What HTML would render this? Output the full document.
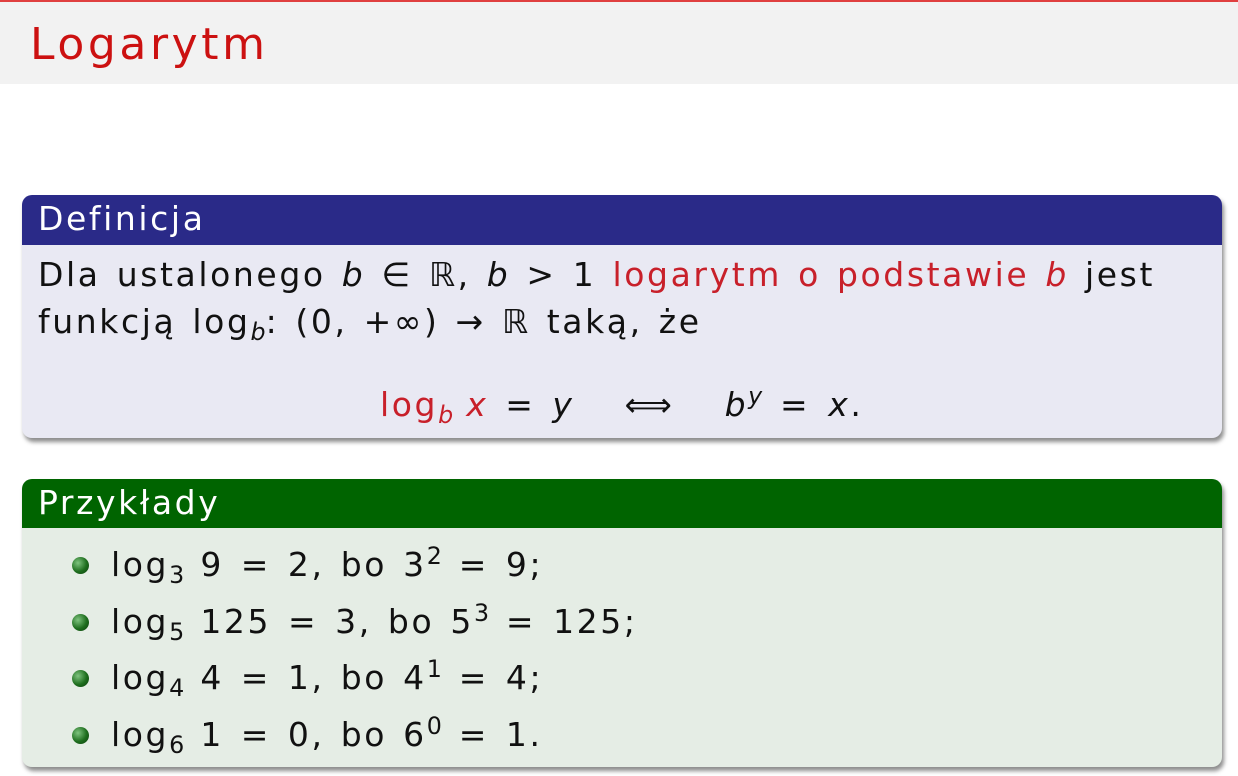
<!DOCTYPE html>
<html><head><meta charset="utf-8"><style>
html,body{margin:0;padding:0}
body{width:1238px;height:776px;position:relative;background:#fff;font-family:"DejaVu Sans","Liberation Sans",sans-serif;color:#111;overflow:hidden}
.t{position:absolute;white-space:nowrap;line-height:1;font-size:33px;letter-spacing:2.6px;word-spacing:3px}
.red{color:#c8202a}
i{font-style:italic}
sub{font-size:0.72em;vertical-align:-0.3em;line-height:0;letter-spacing:0}
sup{font-size:0.72em;vertical-align:0.5em;line-height:0;letter-spacing:0}
.m{display:inline-block;text-align:center}
.box{position:absolute;left:22px;width:1200px;border-radius:10px;overflow:hidden;box-shadow:2px 4px 4px rgba(0,0,0,0.45)}
.bul{position:absolute;left:72px;width:17px;height:17px;border-radius:50%;background:radial-gradient(circle at 35% 35%,#7fc47f,#1e6e1e 55%,#0b3d0b)}
</style></head><body>
<div style="position:absolute;left:0;top:0;width:1238px;height:2px;background:#e04040"></div>
<div style="position:absolute;left:0;top:2px;width:1238px;height:82px;background:#f2f2f2"></div>
<div class="t" style="left:30px;top:23px;font-size:44px;color:#cc1111;letter-spacing:3.6px">Logarytm</div>

<div class="box" style="top:195px;height:243px;background:#e9e9f3">
  <div style="height:50px;background:#2a2a88"></div>
</div>
<div class="t" style="left:38px;top:202px;color:#fff">Definicja</div>
<div class="t" style="left:38px;top:258px">Dla ustalonego <i>b</i> ∈ ℝ, <i>b</i> &gt; 1 <span class="red">logarytm o podstawie <i>b</i></span> jest</div>
<div class="t" style="left:38px;top:305px">funkcją log<sub><i>b</i></sub>: (0, +∞) → ℝ taką, że</div>
<div class="t" style="left:380px;top:388px;word-spacing:0"><span class="red">log<sub><i>b</i></sub> <i>x</i></span><span class="m" style="width:64px">=</span><i>y</i><span class="m" style="width:150px">⟺</span><i>b</i><sup><i>y</i></sup><span class="m" style="width:66px">=</span><i>x</i>.</div>

<div class="box" style="top:479px;height:288px;background:#e5ede5">
  <div style="height:49px;background:#006400"></div>
</div>
<div class="t" style="left:38px;top:486px;color:#fff">Przykłady</div>
<div class="bul" style="top:557px"></div>
<div class="t" style="left:111px;top:548px">log<sub>3</sub> 9<span class="m" style="width:64px">=</span>2, bo 3<sup>2</sup><span class="m" style="width:64px">=</span>9;</div>
<div class="bul" style="top:614px"></div>
<div class="t" style="left:111px;top:605px">log<sub>5</sub> 125<span class="m" style="width:64px">=</span>3, bo 5<sup>3</sup><span class="m" style="width:64px">=</span>125;</div>
<div class="bul" style="top:670px"></div>
<div class="t" style="left:111px;top:661px">log<sub>4</sub> 4<span class="m" style="width:64px">=</span>1, bo 4<sup>1</sup><span class="m" style="width:64px">=</span>4;</div>
<div class="bul" style="top:727px"></div>
<div class="t" style="left:111px;top:718px">log<sub>6</sub> 1<span class="m" style="width:64px">=</span>0, bo 6<sup>0</sup><span class="m" style="width:64px">=</span>1.</div>
</body></html>
